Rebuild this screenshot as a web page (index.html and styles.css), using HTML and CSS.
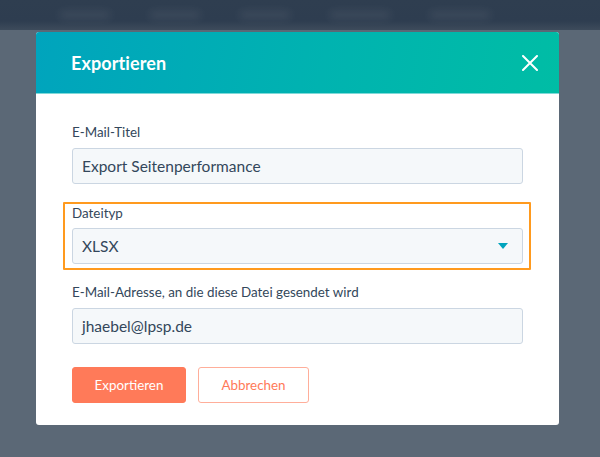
FILE: index.html
```html
<!DOCTYPE html>
<html lang="de">
<head>
<meta charset="utf-8">
<link rel="stylesheet" href="styles.css">
</head>
<body>
<div class="app">
  <div class="topbar">
    <span class="ghost g1"></span><span class="ghost g2"></span><span class="ghost g3"></span><span class="ghost g4"></span><span class="ghost g5"></span>
  </div>
  <div class="stage">
    <div class="modal">
      <div class="modal-header">
        <h1 class="modal-title">Exportieren</h1>
        <svg class="close" width="16" height="16" viewBox="0 0 16 16"><path d="M1 1L15 15M15 1L1 15" stroke="#fff" stroke-width="2" stroke-linecap="round"/></svg>
      </div>
      <div class="modal-body">
        <div class="field f1">
          <label class="label">E-Mail-Titel</label>
          <div class="input">Export Seitenperformance</div>
        </div>
        <div class="field highlight">
          <label class="label">Dateityp</label>
          <div class="input select">XLSX
            <svg class="caret" width="10" height="6" viewBox="0 0 10 6"><path d="M0 0H10L5 6Z" fill="#00a4bd"/></svg>
          </div>
        </div>
        <div class="field f3">
          <label class="label">E-Mail-Adresse, an die diese Datei gesendet wird</label>
          <div class="input">jhaebel@lpsp.de</div>
        </div>
        <div class="actions">
          <button class="btn primary">Exportieren</button>
          <button class="btn secondary">Abbrechen</button>
        </div>
      </div>
    </div>
  </div>
</div>
</body>
</html>
```

FILE: styles.css
```css
html, body {
  margin: 0;
  padding: 0;
}
body {
  width: 600px;
  height: 457px;
  overflow: hidden;
  background: #5b6876;
  font-family: Lato, "Open Sans", sans-serif;
  color: #33475b;
}
.app {
  display: flex;
  flex-direction: column;
  height: 457px;
}
.topbar {
  height: 30px;
  background: linear-gradient(#2f3e50, #2e3d50 70%, #3d4b5b);
  display: flex;
  align-items: center;
  gap: 40px;
  padding-left: 60px;
  overflow: hidden;
}
.ghost {
  height: 8px;
  background: rgba(255,255,255,0.07);
  filter: blur(4px);
  display: block;
}
.g1 { width: 50px; }
.g2 { width: 50px; }
.g3 { width: 50px; }
.g4 { width: 60px; }
.g5 { width: 60px; }
.stage {
  flex: 1;
  padding: 2px 0 0 36px;
}
.modal {
  width: 523px;
  background: #fff;
  border-radius: 3px;
  overflow: hidden;
}
.modal-header {
  height: 61px;
  background: linear-gradient(100deg, #00a4bd 0%, #00b3b0 55%, #00bda5 100%);
  border-bottom: 1px solid #7fd9d8;
  display: flex;
  align-items: center;
  justify-content: space-between;
  padding: 0 21px 0 35px;
}
.modal-title {
  margin: 0;
  font-size: 18px;
  font-weight: 700;
  color: #fff;
  letter-spacing: 0.1px;
}
.close { display: block; }
.modal-body {
  padding: 29px 36px 22px 36px;
  display: flex;
  flex-direction: column;
}
.field {
  display: flex;
  flex-direction: column;
  gap: 7px;
}
.f1 { margin-bottom: 18px; }
.f3 { margin-bottom: 23px; }
.highlight {
  gap: 6px;
  margin: 0 -8px 13px -9px;
  padding: 0 6px 4px 7px;
  border: 2px solid #ff9a1e;
  border-radius: 1px;
}
.label {
  font-size: 13.4px;
  line-height: 18px;
  color: #33475b;
}
.input {
  height: 34px;
  box-sizing: content-box;
  border: 1px solid #cbd6e2;
  border-radius: 3px;
  background: #f5f8fa;
  font-size: 15.5px;
  line-height: 34px;
  padding: 0 9px;
  color: #33475b;
  display: flex;
  align-items: center;
  justify-content: space-between;
}
.caret { display: block; margin-right: 5px; }
.actions {
  display: flex;
  gap: 12px;
}
.btn {
  height: 36px;
  border-radius: 3px;
  font-family: Lato, "Open Sans", sans-serif;
  font-size: 13.4px;
  padding: 0;
  cursor: pointer;
}
.primary {
  width: 114px;
  background: #ff7a59;
  border: 1px solid #ff7a59;
  color: #fff;
}
.secondary {
  width: 111px;
  background: #fff;
  border: 1px solid #ffae9a;
  color: #ff7a59;
}
```
